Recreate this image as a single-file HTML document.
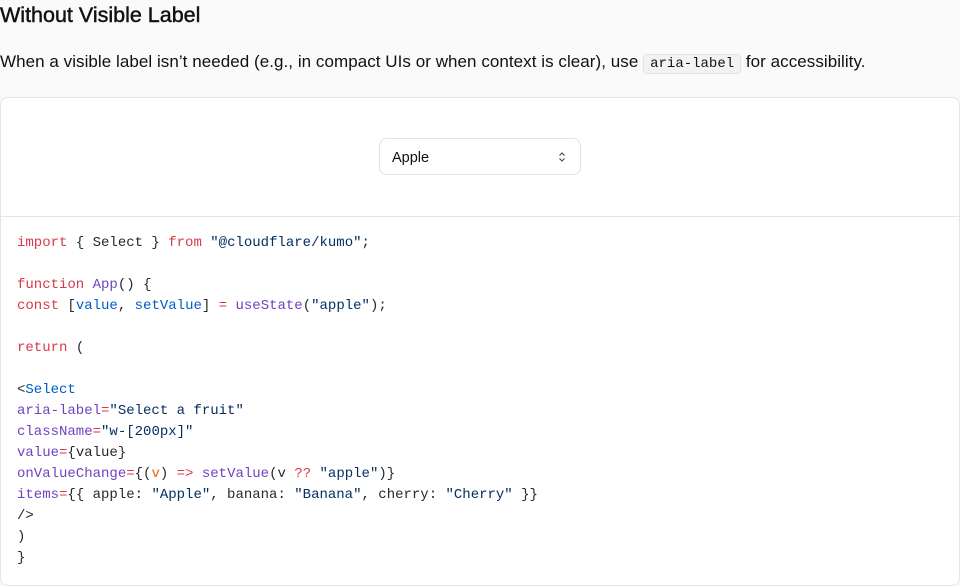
<!DOCTYPE html>
<html><head><style>
html,body{margin:0;padding:0;background:#fafafa;width:960px;height:586px;overflow:hidden}
body{font-family:"Liberation Sans",sans-serif;color:#111}
h3{position:absolute;left:0;top:2px;margin:0;font-size:21.5px;font-weight:normal;-webkit-text-stroke:0.45px #111;line-height:26px}
p{position:absolute;left:0;top:51px;margin:0;font-size:17px;line-height:22px;letter-spacing:0.05px}
code.i{font-family:"Liberation Mono",monospace;font-size:14px;background:#f3f3f3;border:1px solid #e3e3e3;border-radius:4px;padding:1px 6px;letter-spacing:0}
.card{position:absolute;left:0;top:97px;width:958px;height:487px;border:1px solid #e5e5e5;border-radius:8px;background:#fff;overflow:hidden}
.prev{height:118px;border-bottom:1px solid #e5e5e5;position:relative}
.sel{position:absolute;left:378px;top:40px;width:202px;height:37px;border:1px solid #e3e3e3;border-radius:8px;box-sizing:border-box;font-size:14.5px;line-height:35px;padding-left:12px;padding-top:2px}
.sel svg{position:absolute;right:13px;top:12px}
pre{margin:0;padding:16px 16px;font-family:"Liberation Mono",monospace;font-size:14px;line-height:21px;color:#24292e}
.k{color:#d73a49}.s{color:#032f62}.f{color:#6f42c1}.b{color:#005cc5}.o{color:#e36209}
</style></head><body>
<h3>Without Visible Label</h3>
<p>When a visible label isn’t needed (e.g., in compact UIs or when context is clear), use <code class="i">aria-label</code> for accessibility.</p>
<div class="card">
<div class="prev"><div class="sel">Apple<svg width="10" height="12" viewBox="0 0 10 12"><path d="M2.5 4.5L5 2l2.5 2.5M2.5 7.5L5 10l2.5-2.5" fill="none" stroke="#444" stroke-width="1.1"/></svg></div></div>
<pre><span class="k">import</span> { Select } <span class="k">from</span> <span class="s">"@cloudflare/kumo"</span>;

<span class="k">function</span> <span class="f">App</span>() {
<span class="k">const</span> [<span class="b">value</span>, <span class="b">setValue</span>] <span class="k">=</span> <span class="f">useState</span>(<span class="s">"apple"</span>);

<span class="k">return</span> (

&lt;<span class="b">Select</span>
<span class="f">aria-label</span><span class="k">=</span><span class="s">"Select a fruit"</span>
<span class="f">className</span><span class="k">=</span><span class="s">"w-[200px]"</span>
<span class="f">value</span><span class="k">=</span>{value}
<span class="f">onValueChange</span><span class="k">=</span>{(<span class="o">v</span>) <span class="k">=&gt;</span> <span class="f">setValue</span>(v <span class="k">??</span> <span class="s">"apple"</span>)}
<span class="f">items</span><span class="k">=</span>{{ apple: <span class="s">"Apple"</span>, banana: <span class="s">"Banana"</span>, cherry: <span class="s">"Cherry"</span> }}
/&gt;
)
}</pre>
</div>
</body></html>
